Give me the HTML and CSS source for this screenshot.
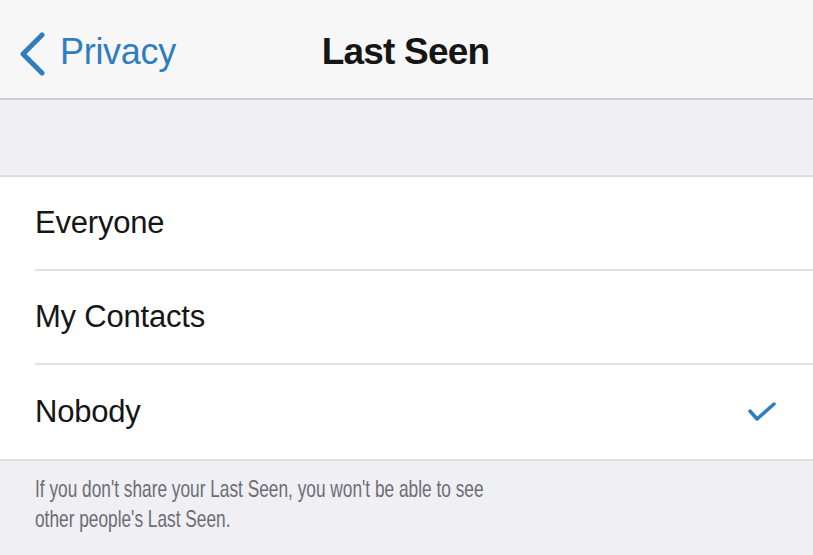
FILE: index.html
```html
<!DOCTYPE html>
<html lang="en">
<head>
  <meta charset="UTF-8">
  <title>Last Seen</title>
  <link rel="stylesheet" href="styles.css">
</head>
<body>

  <div class="navbar">
    <a class="back" href="#">
      <svg class="chevron" width="28" height="44" viewBox="0 0 28 44">
        <polyline points="24,3 5,22 24,41" fill="none" stroke="currentColor" stroke-width="5" stroke-linecap="round" stroke-linejoin="round"/>
      </svg>
      <span>Privacy</span>
    </a>
    <h1>Last Seen</h1>
  </div>

  <div class="spacer"></div>

  <ul class="options">
    <li>Everyone</li>
    <li>My Contacts</li>
    <li class="selected">
      Nobody
      <svg class="check" width="30" height="22" viewBox="0 0 30 22">
        <polyline points="3,10 10,18 27,3" fill="none" stroke="currentColor" stroke-width="3.5" stroke-linecap="round" stroke-linejoin="round"/>
      </svg>
    </li>
  </ul>

  <div class="footer">
    <p class="footnote">If you don't share your Last Seen, you won't be able to see other people's Last Seen.</p>
  </div>

</body>
</html>
```

FILE: styles.css
```css
:root {
  --nav-bg: #f7f7f7;
  --group-bg: #efeff4;
  --blue: #2f7ec0;
  --text: #161616;
  --muted: #6d6d72;
}

body {
  margin: 0;
  font-family: 'Liberation Sans', Arial, sans-serif;
  background-color: var(--group-bg);
  color: var(--text);
}

.navbar {
  position: relative;
  height: 92px;
  padding-top: 6px;
  background-color: var(--nav-bg);
  border-bottom: 2px solid #cfcfd3;
  display: flex;
  align-items: center;
  justify-content: center;
}

.back {
  position: absolute;
  left: 18px;
  top: 32px;
  display: flex;
  align-items: center;
  gap: 14px;
  color: var(--blue);
  text-decoration: none;
  font-size: 36px;
  letter-spacing: -0.3px;
}

.back span {
  margin-top: -4px;
}

h1 {
  margin: 0 0 0 -2px;
  font-size: 37px;
  font-weight: bold;
  letter-spacing: -0.8px;
}

.spacer {
  height: 75px;
}

.options {
  list-style: none;
  margin: 0;
  padding: 0 0 0 35px;
  background-color: #fff;
  border-top: 2px solid #dedee2;
  border-bottom: 2px solid #dedee2;
}

.options li {
  height: 92px;
  display: flex;
  align-items: center;
  justify-content: space-between;
  padding-right: 36px;
  font-size: 31px;
  letter-spacing: -0.2px;
  border-bottom: 2px solid #e2e2e4;
}

.options li:last-child {
  border-bottom: none;
  height: 94px;
}

.check {
  color: var(--blue);
}

.footer {
  padding: 13px 0 0 35px;
}

/* narrow caption text, squeezed like a condensed face */
.footnote {
  margin: 0;
  width: 645px;
  font-size: 24px;
  line-height: 30px;
  color: var(--muted);
  transform: scaleX(0.72);
  transform-origin: left top;
}
```
